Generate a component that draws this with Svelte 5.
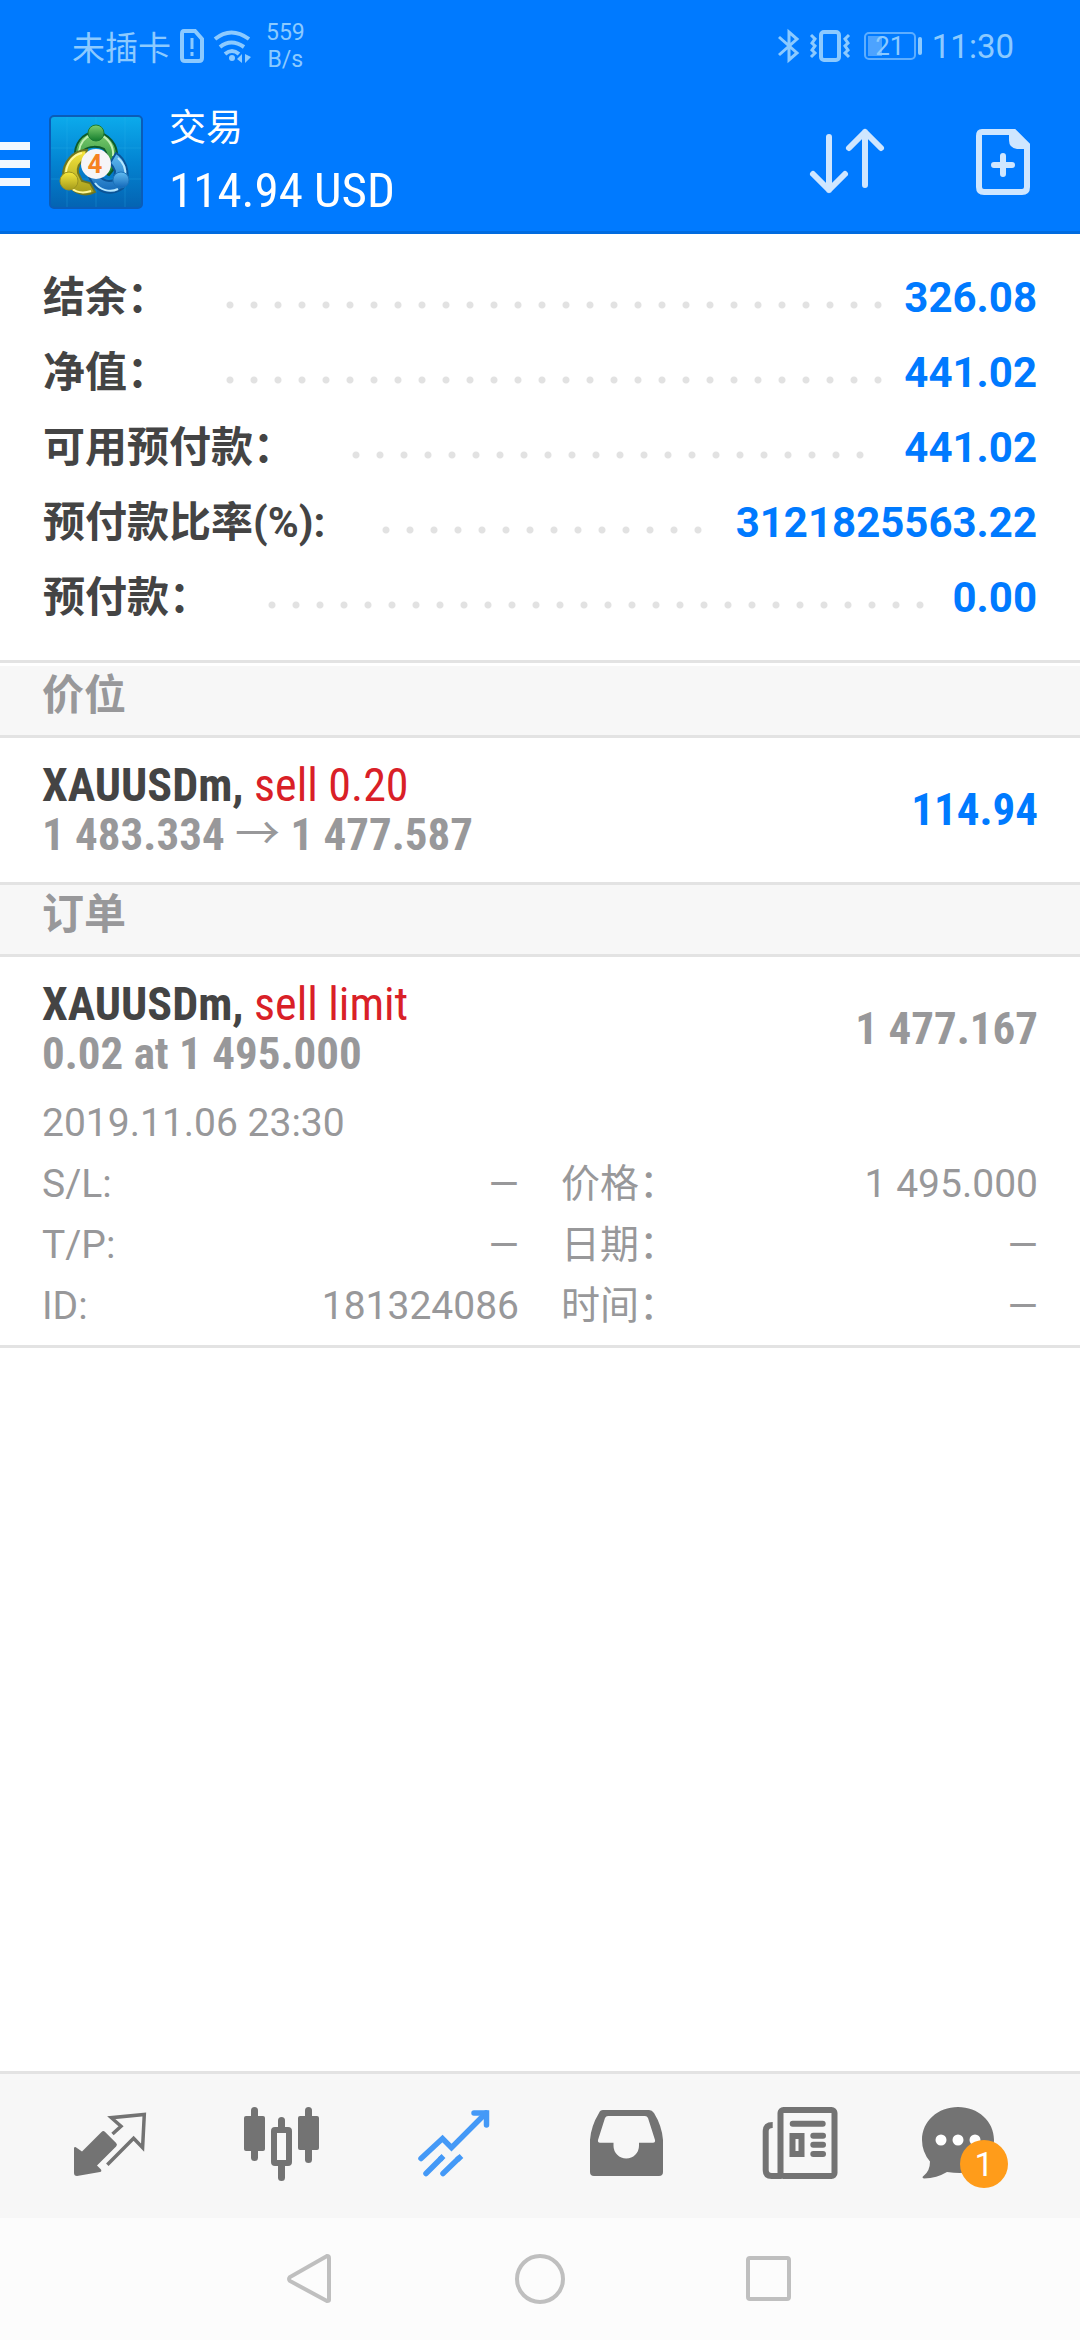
<script lang="ts">
  const profit = "114.94";
  const currency = "USD";

  const summary = [
    { label: "结余：", value: "326.08" },
    { label: "净值：", value: "441.02" },
    { label: "可用预付款：", value: "441.02" },
    { label: "预付款比率(%):", value: "3121825563.22" },
    { label: "预付款：", value: "0.00" },
  ];

  const positions = [
    { symbol: "XAUUSDm", side: "sell 0.20", open: "1 483.334", current: "1 477.587", profit: "114.94" },
  ];

  const orders = [
    {
      symbol: "XAUUSDm",
      side: "sell limit",
      volume: "0.02 at 1 495.000",
      price: "1 477.167",
      time: "2019.11.06 23:30",
      details: [
        { label: "S/L:", value: "—" },
        { label: "价格：", value: "1 495.000" },
        { label: "T/P:", value: "—" },
        { label: "日期：", value: "—" },
        { label: "ID:", value: "181324086" },
        { label: "时间：", value: "—" },
      ],
    },
  ];

  const TABS = [
    { id: "quotes", label: "行情" },
    { id: "charts", label: "图表" },
    { id: "trade", label: "交易" },
    { id: "history", label: "历史" },
    { id: "news", label: "新闻" },
    { id: "messages", label: "消息" },
  ];

  let tab = $state("trade");
  let unread = $state(1);
</script>

<div class="screen">
  <header>
    <div class="status">
      <span class="carrier">未插卡</span>
      <svg class="sim" width="26" height="36" viewBox="0 0 26 36" fill="none" stroke="currentColor" stroke-width="4">
        <path d="M5 3h11l7 8v19q0 3-3 3H6q-3 0-3-3V6q0-3 2-3z" />
        <path d="M13 10v11M13 24v4" stroke-width="3" />
      </svg>
      <svg class="wifi" width="38" height="36" viewBox="0 0 38 36" fill="none" stroke="currentColor" stroke-width="4">
        <path d="M2 11q16-13 34 0M7 19q11-9 24 0M12 26q7-6 14 0" />
        <circle cx="19" cy="30" r="3" fill="currentColor" stroke="none" />
        <path d="M29 26v9l-5-4zM32 26v9l6-6z" fill="currentColor" stroke="none" />
      </svg>
      <span class="speed">559<br />B/s</span>
      <svg class="bluetooth" width="22" height="36" viewBox="0 0 22 36" fill="none" stroke="currentColor" stroke-width="3">
        <path d="M1 9l18 16-8 7V4l8 7L1 27" />
      </svg>
      <svg class="vibrate" width="40" height="36" viewBox="0 0 40 36" fill="none" stroke="currentColor" stroke-width="3">
        <rect x="11" y="4" width="18" height="28" rx="3" stroke-width="4" />
        <path d="M1 7l4 4-3 4 3 3-3 4 3 3-4 4M39 7l-4 4 3 4-3 3 3 4-3 3 4 4" />
      </svg>
      <span class="battery">21</span>
      <span class="clock">11:30</span>
    </div>
    <div class="bar">
      <button class="menu" aria-label="菜单"><i></i><i></i><i></i></button>
      <svg class="logo" width="94" height="94" viewBox="0 0 94 94">
        <defs>
          <linearGradient id="sky" x1="0" y1="0" x2="0" y2="1">
            <stop offset="0" stop-color="#0cabec" />
            <stop offset="0.5" stop-color="#0384d2" />
            <stop offset="1" stop-color="#0463b2" />
          </linearGradient>
          <linearGradient id="green" x1="0" y1="0" x2="0" y2="1">
            <stop offset="0" stop-color="#7fcf70" />
            <stop offset="1" stop-color="#137c2d" />
          </linearGradient>
          <linearGradient id="yellow" x1="0" y1="0" x2="0" y2="1">
            <stop offset="0" stop-color="#f8e83c" />
            <stop offset="1" stop-color="#a39a1b" />
          </linearGradient>
          <linearGradient id="blue" x1="0" y1="0" x2="0" y2="1">
            <stop offset="0" stop-color="#62bdf2" />
            <stop offset="1" stop-color="#1267b8" />
          </linearGradient>
        </defs>
        <rect x="1" y="1" width="92" height="92" rx="4" fill="url(#sky)" stroke="#0a5cb8" stroke-width="2" />
        <path d="M2 33h90M2 64h90M18 2v90M47 2v90M76 2v90" stroke="#35b6ef" stroke-opacity="0.25" />
        <path d="M26 42c-1-13 7-24 20-25 14 1 23 13 22 25 0 8-4 14-8 18l-8-4c8-8 7-16 3-22-6-3-15-3-20 1z" fill="url(#green)" stroke="#0d5a2c" stroke-width="2" />
        <path d="M30 36c1-8 6-14 12-16M52 20c8 4 13 12 12 21" fill="none" stroke="#c3efb4" stroke-width="2" />
        <path d="M38 35c-14 0-24 12-24 26l6 10c6 8 17 11 26 6l-5-9-8-2-4-8c-1-6 2-11 7-14z" fill="url(#yellow)" stroke="#6f7620" stroke-width="2" />
        <path d="M17 57c1-9 7-17 16-19M22 73c6 5 14 5 20 3" fill="none" stroke="#fff79a" stroke-width="2" />
        <path d="M67 38c10 6 13 18 11 28-3 12-19 15-29 8-5-4-8-9-10-15l12 2c3 5 9 6 14 4l1-9c-1-3-3-6-5-8z" fill="url(#blue)" stroke="#0b5497" stroke-width="2" />
        <path d="M69 43c6 5 8 12 7 18M46 68c5 7 15 10 23 6" fill="none" stroke="#b6e7ff" stroke-width="2" />
        <circle cx="47" cy="18" r="8" fill="url(#green)" stroke="#1c7b35" />
        <circle cx="20" cy="66" r="9" fill="url(#yellow)" stroke="#9c9420" />
        <circle cx="72" cy="65" r="8" fill="url(#blue)" stroke="#1b73bb" />
        <circle cx="47" cy="49" r="15" fill="#f5f5f7" />
        <text x="46" y="58" text-anchor="middle" class="four">4</text>
      </svg>
      <h1>
        <span class="title">交易</span>
        <span class="total">{profit} {currency}</span>
      </h1>
      <button class="sort" aria-label="排序">
        <svg width="76" height="68" viewBox="0 0 76 68" fill="none" stroke="currentColor" stroke-width="6" stroke-linecap="round" stroke-linejoin="round">
          <path d="M20 9v53M4 46l16 16 16-16" />
          <path d="M56 57V4M40 20L56 4l16 16" />
        </svg>
      </button>
      <button class="new" aria-label="新订单">
        <svg width="56" height="68" viewBox="0 0 56 68" fill="none" stroke="currentColor" stroke-width="6">
          <path d="M7 4h32l13 13v42q0 5-5 5H9q-5 0-5-5V8q0-4 3-4z" />
          <path d="M34 4h6l13 13v4H42q-8-1-8-9z" fill="currentColor" stroke="none" />
          <path d="M28 28v18M19 37h18" stroke-linecap="round" />
        </svg>
      </button>
    </div>
  </header>

  <main>
    <dl class="summary">
      {#each summary as row}
        <div class="row">
          <dt>{row.label}</dt>
          <dd class="leader"><i></i></dd>
          <dd>{row.value}</dd>
        </div>
      {/each}
    </dl>

    <h2>价位</h2>
    {#each positions as p}
      <section class="position">
        <div>
          <div><b>{p.symbol},</b> <span class="sell">{p.side}</span></div>
          <div class="muted">{p.open} <span class="arrow">→</span> {p.current}</div>
        </div>
        <span class="profit">{p.profit}</span>
      </section>
    {/each}

    <h2>订单</h2>
    {#each orders as o}
      <section class="order">
        <div class="order-head">
          <div>
            <div><b>{o.symbol},</b> <span class="sell">{o.side}</span></div>
            <div class="muted">{o.volume}</div>
          </div>
          <span class="muted">{o.price}</span>
        </div>
        <time>{o.time}</time>
        <dl class="details">
          {#each o.details as d}
            <div>
              <dt>{d.label}</dt>
              <dd>{d.value}</dd>
            </div>
          {/each}
        </dl>
      </section>
    {/each}
  </main>

  <nav class="tabs">
    {#each TABS as t}
      <button class:active={tab === t.id} aria-label={t.label} onclick={() => (tab = t.id)}>
        <span class="icon">
          <svg width="84" height="84" viewBox="0 0 84 84" fill="currentColor">
            {#if t.id === "quotes"}
              <path d="M6 43.5l1.500-.5 6.500 4.500 19.500-19.500q1.800-1.800 3.600 0l11 11q1.800 1.800 0 3.600L29 61.500l4 4q1 2-1 2.500L9 72q-3 0-3-3z" />
              <path
                d="M44.500 30l8.500-7.700-9.700-8.600 33-3.300-1.700 33.300-9-9.400-26.300 26.400"
                fill="none"
                stroke="currentColor"
                stroke-width="3.500"
              />
            {:else if t.id === "charts"}
              <rect x="4" y="12" width="21" height="35" rx="2" />
              <rect x="11" y="3" width="7" height="54" rx="3.500" />
              <rect x="58" y="12" width="21" height="34" rx="2" />
              <rect x="65" y="3" width="7" height="56" rx="3.500" />
              <rect x="38" y="13" width="7" height="14" rx="3.500" />
              <rect x="38" y="58" width="7" height="19" rx="3.500" />
              <rect x="34" y="26" width="15" height="33" rx="1" fill="none" stroke="currentColor" stroke-width="6" />
            {:else if t.id === "trade"}
              <g fill="none" stroke="currentColor" stroke-width="5.500" stroke-linecap="round">
                <path d="M9 54.500L30.500 34.500l9 9.200L74 9" />
                <path d="M62 9h12.500v12" />
                <path d="M14 69.500l15-15M31 69.500l15.500-15" />
                <path d="M28 55.500l3.500-3.500M45 56l4.500-4" stroke-linecap="butt" />
              </g>
            {:else if t.id === "history"}
              <path
                fill-rule="evenodd"
                d="M19 6h46q3 0 5 3 8 13 9 27v32q0 4-4 4H10q-4 0-4-4V36q1-14 9-27 1-3 4-3zM24 12q-2 0-3 2L14 36q-.5 2.700 2 2.700h13.500v3a12.700 12.700 0 0 0 25.500 0v-3h14q2.500 0 2-2.700L64 14q-1-2-3-2z"
              />
            {:else if t.id === "news"}
              <g fill="none" stroke="currentColor" stroke-width="6">
                <rect x="24.500" y="6" width="54" height="66" rx="3" />
                <path d="M16.700 21q-7 0-7 6v39q0 6 6 6h10" />
                <rect x="36.500" y="32" width="9" height="18" />
                <path d="M36.700 19.700h30M57.300 31.700h9.700M57.300 40.700h9.700M57.300 50h9.700" stroke-linecap="round" />
              </g>
            {:else}
              <path d="M30 3c20 0 36 14 36 33S50 69 32 69q-6 0-13-1-10 6-23 6.500-3-1 0-3 6-5 6-14Q-6 48-6 36C-6 17 10 3 30 3z" />
              <g fill="#fff">
                <circle cx="13" cy="36" r="5.500" />
                <circle cx="30" cy="36" r="5.500" />
                <circle cx="47" cy="36" r="5.500" />
              </g>
            {/if}
          </svg>
          {#if t.id === "messages" && unread > 0}
            <span class="badge">{unread}</span>
          {/if}
        </span>
      </button>
    {/each}
  </nav>

  <nav class="system">
    <button aria-label="返回">
      <svg width="52" height="52" viewBox="0 0 52 52"><path d="M45 5v42q0 1-2 1L6 28q-2-2 0-4L43 3q2 0 2 2z" /></svg>
    </button>
    <button aria-label="主屏幕">
      <svg width="52" height="52" viewBox="0 0 52 52"><circle cx="26" cy="26" r="23" /></svg>
    </button>
    <button aria-label="最近任务">
      <svg width="52" height="52" viewBox="0 0 52 52"><rect x="4" y="5" width="41" height="41" rx="2" /></svg>
    </button>
  </nav>
</div>

<style>
  :global(body) {
    margin: 0;
    background: #fff;
  }
  .screen {
    display: flex;
    flex-direction: column;
    min-height: 100vh;
    font-family: Roboto, "Noto Sans CJK SC", sans-serif;
    color: #444;
  }
  button {
    display: flex;
    align-items: center;
    justify-content: center;
    padding: 0;
    border: none;
    background: none;
    color: inherit;
    font: inherit;
    cursor: pointer;
  }
  svg {
    display: block;
    overflow: visible;
  }
  dl,
  dd,
  h1,
  h2 {
    margin: 0;
    font-weight: normal;
  }

  header {
    background: #007aff;
    border-bottom: 3px solid #006be0;
    color: #fff;
  }
  .status {
    display: flex;
    align-items: center;
    height: 92px;
    padding: 0 66px 0 72px;
    color: #8ccaff;
    font-size: 33px;
  }
  .sim {
    margin-left: 8px;
  }
  .wifi {
    margin-left: 8px;
  }
  .speed {
    margin-left: 15px;
    font-size: 23px;
    line-height: 27px;
    text-align: center;
  }
  .bluetooth {
    margin-left: auto;
  }
  .vibrate {
    margin-left: 10px;
  }
  .battery {
    position: relative;
    box-sizing: border-box;
    width: 52px;
    margin-left: 14px;
    border: 2px solid #5eaeff;
    border-radius: 5px;
    background: linear-gradient(#4da3ff, #4da3ff) 2px 2px / 14px 20px no-repeat;
    font-size: 26px;
    line-height: 24px;
    text-align: center;
  }
  .battery::after {
    content: "";
    position: absolute;
    top: 3px;
    right: -8px;
    width: 4px;
    height: 18px;
    border-radius: 2px;
    background: #8ccaff;
  }
  .clock {
    margin-left: 16px;
  }
  .bar {
    display: flex;
    align-items: center;
    height: 139px;
    padding-right: 49px;
  }
  .menu {
    flex-direction: column;
    gap: 10px;
    width: 49px;
    padding-top: 4px;
  }
  .menu i {
    width: 30px;
    height: 8px;
    background: #f2f8ff;
    align-self: flex-start;
  }
  .four {
    font: 700 26px Roboto, sans-serif;
    fill: #f58220;
  }
  h1 {
    display: flex;
    flex-direction: column;
    flex: 1;
    gap: 4px;
    margin-left: 26px;
  }
  .title {
    font-size: 37px;
    line-height: 54px;
  }
  .total {
    font-family: "Roboto Condensed", "Liberation Sans Narrow", Roboto, sans-serif;
    font-size: 49px;
    line-height: 62px;
  }
  .sort,
  .new {
    color: #cfe6ff;
  }
  .new {
    margin-left: 90px;
  }

  main {
    flex: 1;
  }
  .summary {
    padding: 26px 43px 25px;
    font-size: 42px;
    font-weight: bold;
    line-height: 75px;
  }
  .row {
    display: flex;
    align-items: center;
  }
  .row dd {
    color: #007aff;
    font-weight: bold;
  }
  .row .leader {
    flex: 1;
    margin: 15px 4px 0 57px;
  }
  .leader i {
    display: block;
    width: round(down, 100%, 24px);
    height: 8px;
    background: radial-gradient(circle at 4px 4px, #e2e2e2 3px, transparent 4px) 0 0 / 24px 8px;
  }
  h2 {
    padding: 0 42px 10px;
    border-top: 3px solid #e3e3e3;
    border-bottom: 3px solid #e3e3e3;
    background: #f7f7f7;
    color: #98989a;
    font-size: 42px;
    font-weight: bold;
    line-height: 59px;
  }
  .summary + h2 {
    box-shadow: inset 0 3px #fff;
    padding-top: 3px;
  }
  .position,
  .order-head {
    display: flex;
    align-items: center;
    justify-content: space-between;
    font-family: "Roboto Condensed", "Liberation Sans Narrow", Roboto, "Noto Sans CJK SC", sans-serif;
    font-size: 46px;
    line-height: 50px;
  }
  .position {
    padding: 22px 42px;
  }
  .order {
    padding: 22px 42px 8px;
    border-bottom: 3px solid #e3e3e3;
  }
  .sell {
    color: #d92027;
  }
  .muted {
    color: #98989a;
    font-size: 45px;
    font-weight: bold;
  }
  .arrow {
    font-family: "Noto Sans CJK SC", sans-serif;
    font-weight: normal;
    line-height: 0;
  }
  .profit {
    color: #007aff;
    font-size: 45px;
    font-weight: bold;
  }
  time {
    display: block;
    margin-top: 14px;
  }
  time,
  .details {
    color: #98989a;
    font-size: 39px;
    line-height: 61px;
  }
  .details {
    display: grid;
    grid-template-columns: 1fr 1fr;
    column-gap: 42px;
  }
  .details div {
    display: flex;
    justify-content: space-between;
  }

  .tabs {
    display: flex;
    padding: 0 24px;
    border-top: 3px solid #e3e3e3;
    background: #f7f7f7;
    color: #737373;
  }
  .tabs button {
    flex: 1;
    height: 144px;
  }
  .tabs .active {
    color: #4499f7;
  }
  .icon {
    position: relative;
  }
  .badge {
    position: absolute;
    right: 4px;
    bottom: 0;
    width: 48px;
    border-radius: 24px;
    background: #ff9c1a;
    color: #fff;
    font-size: 34px;
    line-height: 48px;
    text-align: center;
  }
  .system {
    display: flex;
    justify-content: center;
    background: #fcfcfc;
  }
  .system button {
    width: 230px;
    height: 122px;
  }
  .system svg {
    fill: none;
    stroke: #bfbfbf;
    stroke-width: 4;
  }
</style>
